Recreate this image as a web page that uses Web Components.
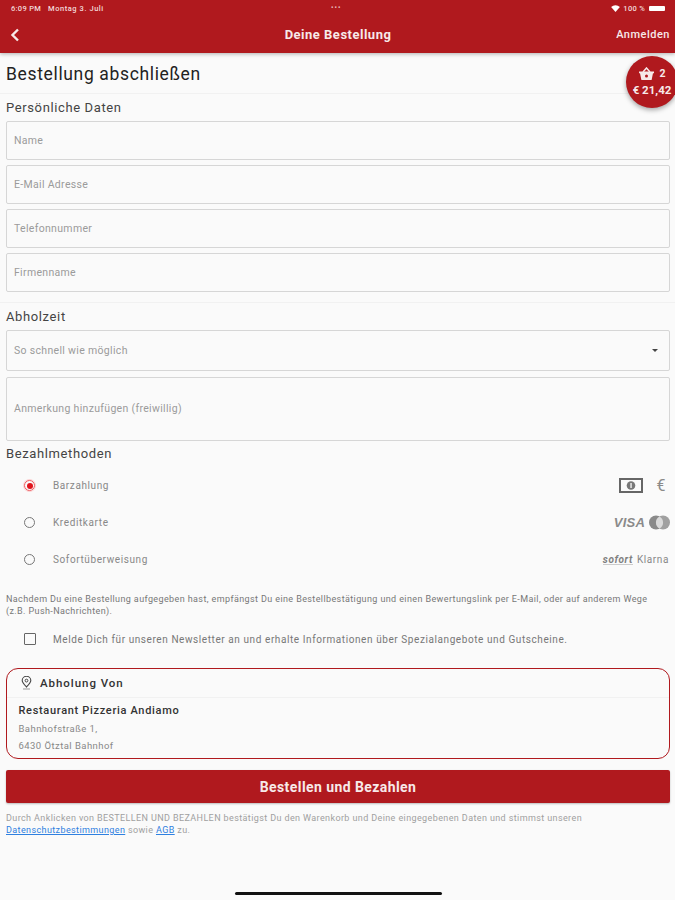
<!DOCTYPE html>
<html lang="de">
<head>
<meta charset="utf-8">
<title>Deine Bestellung</title>
<style>
    html, body { margin: 0; height: 100%; }
    body {
        width: 675px;
        height: 900px;
        overflow: hidden;
        background: #fafafa;
        font-family: Roboto, "Liberation Sans", sans-serif;
    }
</style>
</head>
<body>
<order-page>
    <app-header slot="header" title="Deine Bestellung" action="Anmelden"></app-header>
    <cart-badge count="2" total="€ 21,42"></cart-badge>

    <h-title>Bestellung abschließen</h-title>

    <form-section label="Persönliche Daten" gap="5" top="6" bottom="10" rule>
        <text-field label="Name"></text-field>
        <text-field label="E-Mail Adresse"></text-field>
        <text-field label="Telefonnummer"></text-field>
        <text-field label="Firmenname"></text-field>
    </form-section>

    <form-section label="Abholzeit" gap="6" top="6" bottom="0">
        <text-field label="So schnell wie möglich" height="41" select></text-field>
        <text-field label="Anmerkung hinzufügen (freiwillig)" height="64"></text-field>
    </form-section>

    <form-section label="Bezahlmethoden" gap="0" top="5" bottom="0">
        <pay-row label="Barzahlung" checked>
            <svg width="24" height="15" viewBox="0 0 24 15" aria-hidden="true">
                <rect x="1" y="1" width="22" height="13" fill="none" stroke="#666" stroke-width="2"/>
                <circle cx="12" cy="7.5" r="4.3" fill="#777"/>
                <rect x="11.4" y="5" width="1.3" height="5" fill="#fafafa"/>
            </svg>
            <span style="font:400 16px Roboto,sans-serif;color:#8a8a8a;margin:0 4px 0 9px">€</span>
        </pay-row>
        <pay-row label="Kreditkarte">
            <span style="font:italic 700 13px 'Liberation Sans',sans-serif;color:#8a8a8a;letter-spacing:.2px">VISA</span>
            <svg width="21" height="15" viewBox="0 0 21 15" aria-hidden="true">
                <circle cx="7" cy="7.5" r="7" fill="#8a8a8a"/>
                <circle cx="14" cy="7.5" r="7" fill="#a0a0a0"/>
                <path d="M10.5 1.4a7 7 0 0 1 0 12.2a7 7 0 0 1 0-12.2z" fill="#dadada"/>
            </svg>
        </pay-row>
        <pay-row label="Sofortüberweisung">
            <span style="font:italic 700 10px Roboto,sans-serif;color:#808080;border-bottom:1px solid #ccc;line-height:9px">sofort</span>
            <span style="font:400 10px Roboto,sans-serif;color:#888;margin-right:1px">Klarna</span>
        </pay-row>
    </form-section>

    <small-note top="15">Nachdem Du eine Bestellung aufgegeben hast, empfängst Du eine Bestellbestätigung und einen Bewertungslink per E-Mail, oder auf anderem Wege<br>(z.B. Push-Nachrichten).</small-note>

    <check-row>Melde Dich für unseren Newsletter an und erhalte Informationen über Spezialangebote und Gutscheine.</check-row>

    <pickup-card heading="Abholung Von" name="Restaurant Pizzeria Andiamo" street="Bahnhofstraße 1," city="6430 Ötztal Bahnhof"></pickup-card>

    <order-button>Bestellen und Bezahlen</order-button>

    <small-note top="9" color="#a0a0a0">Durch Anklicken von BESTELLEN UND BEZAHLEN bestätigst Du den Warenkorb und Deine eingegebenen Daten und stimmst unseren<br><a href="#">Datenschutzbestimmungen</a> sowie <a href="#">AGB</a> zu.</small-note>
</order-page>

<script>
class OrderPage extends HTMLElement {
    constructor() {
        super();
        this.attachShadow({ mode: 'open' });
        this.shadowRoot.innerHTML = `
            <style>
                :host { display: flex; flex-direction: column; position: relative; width: 675px; height: 900px; overflow: hidden; }
                .body { display: flex; flex-direction: column; padding: 0 5px 0 6px; }
                .home {
                    position: absolute; left: 235px; bottom: 5px;
                    width: 207px; height: 3px; border-radius: 2px; background: #111;
                }
            </style>
            <slot name="header"></slot>
            <div class="body"><slot></slot></div>
            <div class="home"></div>
        `;
    }
}

class AppHeader extends HTMLElement {
    constructor() {
        super();
        this.attachShadow({ mode: 'open' });
    }
    connectedCallback() {
        this.shadowRoot.innerHTML = `
            <style>
                :host {
                    display: block; height: 53px; background: #b0191e; color: #fff;
                    box-shadow: 0 1px 4px rgba(0,0,0,.3); position: relative; z-index: 1;
                }
                .status {
                    display: flex; align-items: center; height: 16px; padding: 0 10px 0 11px;
                    font-size: 7.5px; font-weight: 500; letter-spacing: .3px; color: #f3d9da;
                }
                .status .date { margin-left: 7px; letter-spacing: .55px; }
                .dots { position: absolute; left: 331px; top: 5px; font-size: 7px; letter-spacing: 1px; line-height: 6px; color: #e9b9bb; }
                .right { margin-left: auto; display: flex; align-items: center; gap: 3px; }
                .battery { width: 16px; height: 5px; background: #fff; border-radius: 1px; margin-left: 1px; }
                .bar {
                    display: grid; grid-template-columns: 56px 1fr 60px; align-items: center;
                    height: 37px; padding: 0 5px 0 10px;
                }
                .title { text-align: center; font-size: 13px; font-weight: 700; letter-spacing: .5px; color: #f7e9e9; }
                .action { text-align: right; font-size: 11px; font-weight: 500; letter-spacing: .5px; white-space: nowrap; justify-self: end; color: #f7e9e9; }
                svg { display: block; }
            </style>
            <div class="status">
                <span>6:09 PM</span><span class="date">Montag 3. Juli</span>
                <span class="dots">•••</span>
                <span class="right">
                    <svg width="9" height="7" viewBox="0 0 10 8"><path d="M0 2.4a7 7 0 0 1 10 0L5 8z" fill="#fff"/></svg>
                    <span>100 %</span><span class="battery"></span>
                </span>
            </div>
            <div class="bar">
                <svg width="10" height="14" viewBox="0 0 10 14" aria-hidden="true">
                    <path d="M8 1.5 2.5 7 8 12.5" fill="none" stroke="#f7e9e9" stroke-width="2.4"/>
                </svg>
                <div class="title">${this.getAttribute('title')}</div>
                <div class="action">${this.getAttribute('action')}</div>
            </div>
        `;
    }
}

class CartBadge extends HTMLElement {
    constructor() {
        super();
        this.attachShadow({ mode: 'open' });
    }
    connectedCallback() {
        this.shadowRoot.innerHTML = `
            <style>
                :host {
                    position: absolute; left: 626px; top: 56px; z-index: 2;
                    width: 52px; height: 52px; border-radius: 50%;
                    background: #b0191e; color: #f7e9e9;
                    box-shadow: 0 2px 5px rgba(0,0,0,.35);
                    display: flex; flex-direction: column; align-items: center; justify-content: center;
                    font-size: 11.5px; font-weight: 700; line-height: 17px; white-space: nowrap;
                }
                .top { display: flex; align-items: center; gap: 5px; padding-left: 1px; font-size: 10.5px; }
                svg { display: block; }
            </style>
            <div class="top">
                <svg width="15" height="13" viewBox="0 0 15 13" aria-hidden="true">
                    <path d="M4 5 7.5 1 11 5" fill="none" stroke="#f7e9e9" stroke-width="1.5"/>
                    <path d="M0 4.6h15v1.6h-1L12.6 13H2.4L1 6.2H0z" fill="#f7e9e9"/>
                    <circle cx="7.5" cy="9" r="1.5" fill="#b0191e"/>
                </svg>
                <span>${this.getAttribute('count')}</span>
            </div>
            <div>${this.getAttribute('total')}</div>
        `;
    }
}

class HTitle extends HTMLElement {
    constructor() {
        super();
        this.attachShadow({ mode: 'open' });
        this.shadowRoot.innerHTML = `
            <style>
                :host {
                    display: block; height: 40px; line-height: 42px; color: #222;
                    font-size: 17.5px; letter-spacing: .65px;
                    margin: 0 -5px 0 -6px; padding-left: 6px;
                    border-bottom: 1px solid #f1f1f1;
                }
            </style>
            <slot></slot>
        `;
    }
}

class FormSection extends HTMLElement {
    constructor() {
        super();
        this.attachShadow({ mode: 'open' });
    }
    connectedCallback() {
        const gap = this.getAttribute('gap');
        const rule = this.hasAttribute('rule');
        this.shadowRoot.innerHTML = `
            <style>
                :host {
                    display: block; padding-top: ${this.getAttribute('top')}px; padding-bottom: ${this.getAttribute('bottom')}px;
                    ${rule ? 'border-bottom: 1px solid #f1f1f1; margin: 0 -5px 0 -6px; padding-left: 6px; padding-right: 5px;' : ''}
                }
                .label { height: 16px; line-height: 16px; font-size: 13px; letter-spacing: .62px; color: #444; margin-bottom: 5px; }
                .items { display: flex; flex-direction: column; gap: ${gap}px; }
            </style>
            <div class="label">${this.getAttribute('label')}</div>
            <div class="items"><slot></slot></div>
        `;
    }
}

class TextField extends HTMLElement {
    constructor() {
        super();
        this.attachShadow({ mode: 'open' });
    }
    connectedCallback() {
        const height = this.getAttribute('height') || 39;
        const select = this.hasAttribute('select');
        this.shadowRoot.innerHTML = `
            <style>
                :host {
                    display: flex; align-items: center; justify-content: space-between; box-sizing: border-box;
                    height: ${height}px; padding: 0 11px ${height > 50 ? 2 : 0}px 7px;
                    border: 1px solid #d6d6d6; border-radius: 2px; background: #fafafa;
                    font-size: 10.5px; letter-spacing: .32px; color: #9b9b9b;
                }
                .arrow { width: 0; height: 0; border: 3px solid transparent; border-top: 3px solid #444; border-bottom: 0; }
            </style>
            <span>${this.getAttribute('label')}</span>
            ${select ? '<span class="arrow"></span>' : ''}
        `;
    }
}

class PayRow extends HTMLElement {
    constructor() {
        super();
        this.attachShadow({ mode: 'open' });
    }
    connectedCallback() {
        const checked = this.hasAttribute('checked');
        this.shadowRoot.innerHTML = `
            <style>
                :host {
                    display: grid; grid-template-columns: 47px 1fr auto; align-items: center;
                    height: 37px; font-size: 10px; letter-spacing: .6px; color: #888;
                }
                .radio {
                    width: 11px; height: 11px; margin-left: 18px; border-radius: 50%; box-sizing: border-box;
                    border: 1.3px solid ${checked ? '#ef5a5f' : '#777'};
                    display: flex; align-items: center; justify-content: center;
                    ${checked ? 'box-shadow: 0 0 0 1px #fbd3d4;' : ''}
                }
                .radio i { width: 6px; height: 6px; border-radius: 50%; background: #e0141c; display: ${checked ? 'block' : 'none'}; }
                .logos { display: flex; align-items: center; gap: 4px; }
                ::slotted(svg) { display: block; flex: none; }
            </style>
            <span class="radio"><i></i></span>
            <span>${this.getAttribute('label')}</span>
            <span class="logos"><slot></slot></span>
        `;
    }
}

class SmallNote extends HTMLElement {
    constructor() {
        super();
        this.attachShadow({ mode: 'open' });
    }
    connectedCallback() {
        this.shadowRoot.innerHTML = `
            <style>
                :host {
                    display: block; padding-top: ${this.getAttribute('top') || 0}px;
                    font-size: 9px; line-height: 12px; letter-spacing: .39px; white-space: nowrap;
                    color: ${this.getAttribute('color') || '#777'};
                }
                ::slotted(a) { color: #2f80e0; }
            </style>
            <slot></slot>
        `;
    }
}

class CheckRow extends HTMLElement {
    constructor() {
        super();
        this.attachShadow({ mode: 'open' });
        this.shadowRoot.innerHTML = `
            <style>
                :host {
                    display: grid; grid-template-columns: 47px 1fr; align-items: center;
                    height: 34px; margin-top: 5px; font-size: 10px; letter-spacing: .58px; color: #777;
                }
                .box { width: 12px; height: 12px; margin-left: 18px; box-sizing: border-box; border: 1.4px solid #666; border-radius: 1px; }
            </style>
            <span class="box"></span>
            <span><slot></slot></span>
        `;
    }
}

class PickupCard extends HTMLElement {
    constructor() {
        super();
        this.attachShadow({ mode: 'open' });
    }
    connectedCallback() {
        this.shadowRoot.innerHTML = `
            <style>
                :host {
                    display: block; box-sizing: border-box; height: 91px; margin-top: 12px;
                    border: 1.5px solid #b0191e; border-radius: 12px;
                }
                .head {
                    display: flex; align-items: center; gap: 8px; height: 28px; padding-left: 14px;
                    border-bottom: 1px solid #f1f1f1; font-size: 11.5px; font-weight: 500; letter-spacing: .95px; color: #333;
                }
                .name { margin: 6px 0 0 11.5px; font-size: 11px; font-weight: 500; letter-spacing: .68px; color: #333; line-height: 14px; }
                .line { margin: 4px 0 0 11.5px; font-size: 9.5px; letter-spacing: .45px; color: #888; line-height: 13px; }
                svg { display: block; }
            </style>
            <div class="head">
                <svg width="11" height="14" viewBox="0 0 11 14" aria-hidden="true">
                    <path d="M5.5 11C3 8.4 1.2 6.6 1.2 4.6a4.3 4.3 0 0 1 8.6 0C9.8 6.6 8 8.4 5.5 11z" fill="none" stroke="#444" stroke-width="1.1"/>
                    <circle cx="5.5" cy="4.6" r="1.4" fill="none" stroke="#444" stroke-width="1"/>
                    <path d="M2 13h7" stroke="#999" stroke-width="1"/>
                </svg>
                <span>${this.getAttribute('heading')}</span>
            </div>
            <div class="name">${this.getAttribute('name')}</div>
            <div class="line">${this.getAttribute('street')}</div>
            <div class="line">${this.getAttribute('city')}</div>
        `;
    }
}

class OrderButton extends HTMLElement {
    constructor() {
        super();
        this.attachShadow({ mode: 'open' });
        this.shadowRoot.innerHTML = `
            <style>
                :host {
                    display: flex; align-items: center; justify-content: center;
                    height: 33px; margin-top: 11px; background: #b0191e; border-radius: 2px;
                    color: #f7e9e9; font-size: 14px; font-weight: 700; letter-spacing: .42px;
                    box-shadow: 0 1px 2px rgba(0,0,0,.25);
                }
            </style>
            <slot></slot>
        `;
    }
}

customElements.define('order-page', OrderPage);
customElements.define('app-header', AppHeader);
customElements.define('cart-badge', CartBadge);
customElements.define('h-title', HTitle);
customElements.define('form-section', FormSection);
customElements.define('text-field', TextField);
customElements.define('pay-row', PayRow);
customElements.define('small-note', SmallNote);
customElements.define('check-row', CheckRow);
customElements.define('pickup-card', PickupCard);
customElements.define('order-button', OrderButton);
</script>
</body>
</html>
